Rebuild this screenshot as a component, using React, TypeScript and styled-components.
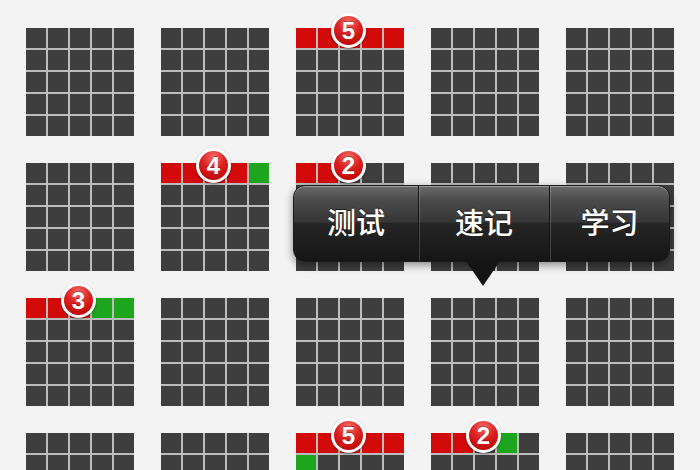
import React from 'react';
import styled, { createGlobalStyle } from 'styled-components';

const GlobalStyle = createGlobalStyle`
  html, body {
    margin: 0;
    padding: 0;
    background: #f3f3f3;
    overflow: hidden;
  }
`;

type CellState = 'R' | 'G' | 'D';

const cellColors: Record<CellState, string> = {
  R: '#d30a0a',
  G: '#1ea51e',
  D: '#3e3e3e',
};

const Page = styled.div`
  position: relative;
  width: 700px;
  height: 470px;
  overflow: hidden;
  box-sizing: border-box;
  padding: 28px 0 0 26px;
  display: grid;
  grid-template-columns: repeat(5, 108px);
  grid-auto-rows: 108px;
  gap: 27px;
  background: #f3f3f3;
`;

const Tile = styled.div`
  position: relative;
  width: 108px;
  height: 108px;
`;

const Board = styled.div`
  display: grid;
  grid-template-columns: repeat(5, 20px);
  grid-template-rows: repeat(5, 20px);
  gap: 2px;
  background: #bcbcbc;
`;

const Cell = styled.div<{ $state: CellState }>`
  background: ${(p) => cellColors[p.$state]};
`;

const Badge = styled.div`
  position: absolute;
  top: -15px;
  left: 35px;
  width: 29px;
  height: 29px;
  border-radius: 50%;
  border: 3px solid #fff;
  background: radial-gradient(circle at 50% 20%, #f36a64 0%, #dc2020 45%, #b00000 100%);
  box-shadow: 0 1px 2px rgba(0, 0, 0, 0.45);
  color: #fff;
  display: flex;
  align-items: center;
  justify-content: center;
  font-family: 'Liberation Sans', Arial, sans-serif;
  font-weight: bold;
  font-size: 24px;
  line-height: 1;
  text-shadow: 0 -1px 0 rgba(0, 0, 0, 0.3);
`;

const Popup = styled.div`
  position: absolute;
  left: 293px;
  top: 185px;
  width: 377px;
  height: 77px;
  box-sizing: border-box;
  display: flex;
  border-radius: 12px;
  border: 1px solid #1a1a1a;
  background: linear-gradient(
    to bottom,
    #6a6a6a 0%,
    #4a4a4a 20%,
    #363636 48%,
    #262626 50%,
    #1c1c1c 80%,
    #151515 100%
  );
  box-shadow: inset 0 1px 0 rgba(255, 255, 255, 0.35), 0 3px 8px rgba(0, 0, 0, 0.45);

  &::after {
    content: '';
    position: absolute;
    left: 172px;
    bottom: -25px;
    border-left: 17px solid transparent;
    border-right: 17px solid transparent;
    border-top: 25px solid #151515;
  }
`;

const Segment = styled.div<{ $width: number; $divider?: boolean }>`
  width: ${(p) => p.$width}px;
  display: flex;
  align-items: center;
  justify-content: center;
  padding-bottom: 6px;
  box-sizing: border-box;
  color: #fff;
  font-family: 'Noto Sans CJK SC', 'Noto Sans', sans-serif;
  font-size: 29px;
  font-weight: 500;
  text-shadow: 0 -1px 0 rgba(0, 0, 0, 0.6);
  border-left: ${(p) => (p.$divider ? '1px solid #141414' : 'none')};
  box-shadow: ${(p) => (p.$divider ? 'inset 1px 0 0 rgba(255, 255, 255, 0.18)' : 'none')};
`;

type TileData = { badge?: number; rows?: string[] };

const special: Record<number, TileData> = {
  2: { badge: 5, rows: ['RRRRR'] },
  6: { badge: 4, rows: ['RRRRG'] },
  7: { badge: 2, rows: ['RRDDD'] },
  10: { badge: 3, rows: ['RRRGG'] },
  17: { badge: 5, rows: ['RRRRR', 'GDDDD'] },
  18: { badge: 2, rows: ['RRDGD'] },
};

const cellsFor = (data?: TileData): CellState[] => {
  const cells: CellState[] = Array(25).fill('D');
  data?.rows?.forEach((row, r) => {
    row.split('').forEach((c, i) => {
      cells[r * 5 + i] = c as CellState;
    });
  });
  return cells;
};

const menu = [
  { label: '测试', width: 124 },
  { label: '速记', width: 131 },
  { label: '学习', width: 120 },
];

export default function App() {
  return (
    <>
      <GlobalStyle />
      <Page>
        {Array.from({ length: 20 }).map((_, i) => {
          const data = special[i];
          return (
            <Tile key={i}>
              <Board>
                {cellsFor(data).map((s, j) => (
                  <Cell key={j} $state={s} />
                ))}
              </Board>
              {data?.badge && <Badge>{data.badge}</Badge>}
            </Tile>
          );
        })}
        <Popup>
          {menu.map((m, i) => (
            <Segment key={m.label} $width={m.width} $divider={i > 0}>
              {m.label}
            </Segment>
          ))}
        </Popup>
      </Page>
    </>
  );
}
